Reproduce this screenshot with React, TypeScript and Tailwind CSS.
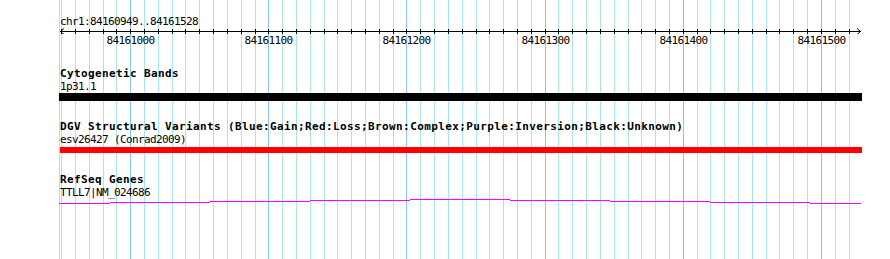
const START = 84160949;
const PX_PER_BP = 1.3814;
const X0 = 130.2; // x of 84161000

function bpToX(bp: number) {
  return X0 + (bp - 84161000) * PX_PER_BP;
}

const minorTicks: number[] = [];
for (let bp = 84160950; bp <= 84161520; bp += 10) minorTicks.push(bp);
const majorTicks = [84161000, 84161100, 84161200, 84161300, 84161400, 84161500];

// intron "hat" drawn as stepped horizontal runs
const geneSegments: [number, number, number][] = [
  [59, 110, 4.5],
  [110, 210, 3.5],
  [210, 310, 2.5],
  [310, 410, 1.5],
  [410, 510, 0.5],
  [510, 610, 1.5],
  [610, 710, 2.5],
  [710, 810, 3.5],
  [810, 861, 4.5],
];

function GridLines() {
  return (
    <svg className="absolute inset-0" width={890} height={259}>
      <line x1={59.5} y1={0} x2={59.5} y2={259} stroke="#a8e6ec" strokeWidth={1} />
      {minorTicks.map((bp) => {
        const x = Math.round(bpToX(bp)) + 0.5;
        const major = bp % 100 === 0;
        return <line key={bp} x1={x} y1={0} x2={x} y2={259} stroke={major ? "#86c6ee" : "#a8e6ec"} strokeWidth={1} />;
      })}
    </svg>
  );
}

function Ruler() {
  return (
    <svg width={890} height={6} className="block">
      <line x1={60} y1={3.5} x2={861} y2={3.5} stroke="#000" strokeWidth={1} />
      <path d="M64 0.5 L60.5 3.5 L64 6.5" fill="none" stroke="#000" strokeWidth={1} />
      <path d="M857 0.5 L860.5 3.5 L857 6.5" fill="none" stroke="#000" strokeWidth={1} />
      {minorTicks.map((bp) => {
        const x = Math.round(bpToX(bp)) + 0.5;
        return <line key={bp} x1={x} y1={1} x2={x} y2={6} stroke="#000" strokeWidth={1} />;
      })}
    </svg>
  );
}

function TrackTitle({ children, className = "" }: { children: React.ReactNode; className?: string }) {
  return <div className={`pl-[60px] text-[11px] font-bold leading-[12px] tracking-[0.38px] text-black ${className}`}>{children}</div>;
}

function FeatureLabel({ children }: { children: React.ReactNode }) {
  return <div className="pl-[60px] text-[11px] leading-[13px] tracking-[-0.62px] text-black">{children}</div>;
}

export default function App() {
  return (
    <div className="relative h-[259px] w-[890px] overflow-hidden bg-white font-['DejaVu_Sans_Mono',monospace]">
      <GridLines />
      <div className="relative pt-[15px]">
        <div className="pl-[60px] text-[11px] leading-[13px] tracking-[-0.62px] text-black">
          chr1:{START}..84161528
        </div>
        <Ruler />
        <div className="relative h-[13px] text-[11px] leading-[13px] tracking-[-0.62px] text-black">
          {majorTicks.map((bp) => (
            <span key={bp} className="absolute top-0 -translate-x-1/2" style={{ left: Math.round(bpToX(bp)) + 0.5 }}>
              {bp}
            </span>
          ))}
        </div>

        <TrackTitle className="mt-[21px]">Cytogenetic Bands</TrackTitle>
        <FeatureLabel>1p31.1</FeatureLabel>
        <div className="ml-[59px] h-[8px] w-[803px] bg-black" />

        <TrackTitle className="mt-[20px]">
          DGV Structural Variants (Blue:Gain;Red:Loss;Brown:Complex;Purple:Inversion;Black:Unknown)
        </TrackTitle>
        <FeatureLabel>esv26427 (Conrad2009)</FeatureLabel>
        <div className="ml-[60px] mt-px h-[6px] w-[802px] bg-[#ff0000]" />

        <TrackTitle className="mt-[21px]">RefSeq Genes</TrackTitle>
        <FeatureLabel>TTLL7|NM_024686</FeatureLabel>
        <svg width={890} height={6} className="block">
          {geneSegments.map(([x1, x2, y]) => (
            <line key={x1} x1={x1} y1={y} x2={x2} y2={y} stroke="#ff00ff" strokeWidth={1} />
          ))}
        </svg>
      </div>
    </div>
  );
}
